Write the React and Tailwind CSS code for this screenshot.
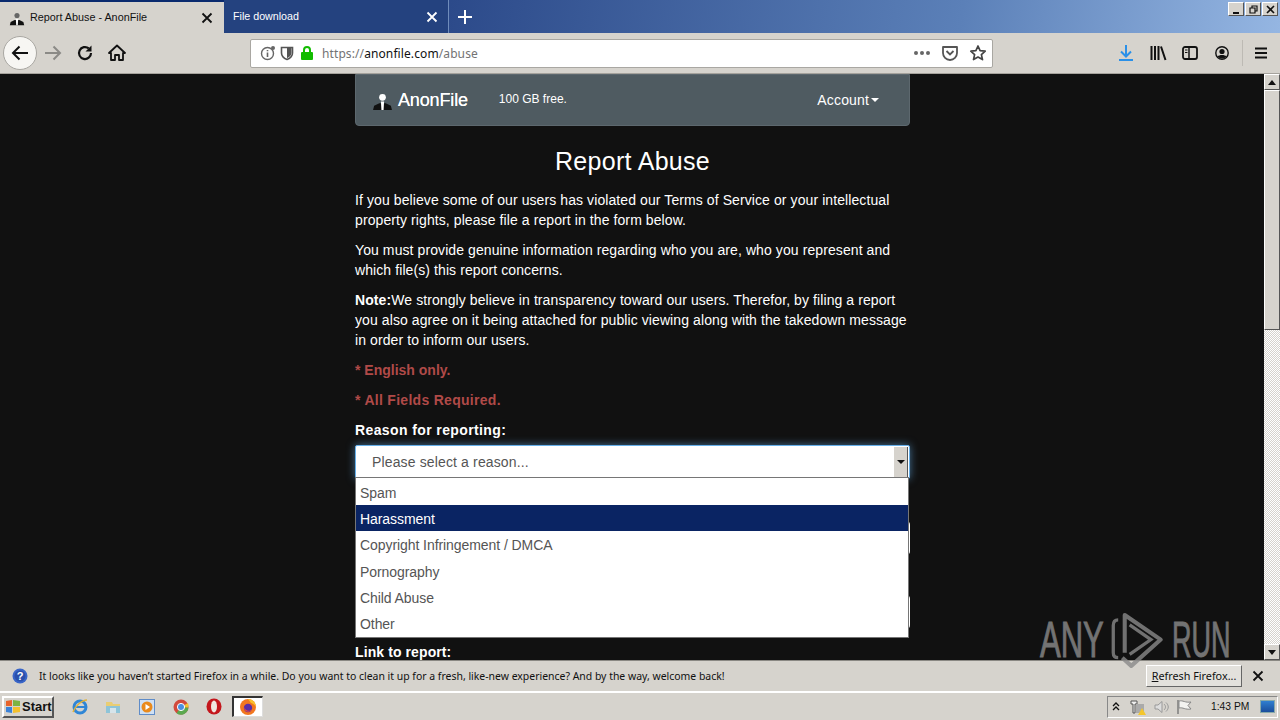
import React from "react";

const P = ({ children, className = "" }) => (
  <p className={"text-[14px] leading-[20px] text-white mb-[10px] " + className}>{children}</p>
);

const options = ["Spam", "Harassment", "Copyright Infringement / DMCA", "Pornography", "Child Abuse", "Other"];

function Suit({ size = 20, fg = "#111", head = "#fff", tie = "#fff" }) {
  return (
    <svg width={size} height={size} viewBox="0 0 20 20">
      <path d="M1 19 L2 15 L7 12.5 L13 12.5 L18 15 L19 19 Z" fill={fg} />
      <circle cx="10" cy="7" r="3.2" fill={head} />
      <path d="M8.5 11 L11.5 11 L11 19 L9 19 Z" fill={tie} />
    </svg>
  );
}

function TabBar() {
  return (
    <div className="h-[33px] flex bg-[linear-gradient(100deg,#24427f_0%,#2c4a8a_35%,#5b80b8_75%,#95b6e2_100%)] relative shrink-0">
      <div className="w-[224px] h-[33px] bg-[#d6d3cd] border-t-2 border-[#0a2a6e] flex items-center pl-[9px] pr-[11px]">
        <Suit size={16} head="#666" />
        <span className="ml-[5px] text-[10.8px] text-[#111] font-['Liberation_Sans',sans-serif]">Report Abuse - AnonFile</span>
        <svg className="ml-auto" width="12" height="12" viewBox="0 0 12 12"><path d="M1.5 1.5 L10.5 10.5 M10.5 1.5 L1.5 10.5" stroke="#111" strokeWidth="1.8" /></svg>
      </div>
      <div className="w-[225px] flex items-center pl-[9px] pr-[10px] bg-[#24427f] border-r border-[#6f8cbb]">
        <span className="text-[10.7px] text-white font-['Liberation_Sans',sans-serif]">File download</span>
        <svg className="ml-auto" width="12" height="12" viewBox="0 0 12 12"><path d="M1.5 1.5 L10.5 10.5 M10.5 1.5 L1.5 10.5" stroke="#fff" strokeWidth="1.8" /></svg>
      </div>
      <div className="w-[32px] flex items-center justify-center">
        <svg width="16" height="16" viewBox="0 0 16 16"><path d="M8 1 V15 M1 8 H15" stroke="#fff" strokeWidth="2" /></svg>
      </div>
      <div className="absolute right-[2px] top-[2px] flex gap-[1px]">
        {[
          <path key="a" d="M3 10 H9" stroke="#111" strokeWidth="2" />,
          <path key="b" d="M3 5 H8 V10 H3 Z M5 5 V3 H10 V8 H8" stroke="#111" strokeWidth="1.2" fill="none" />,
          <path key="c" d="M3 3 L10 10 M10 3 L3 10" stroke="#111" strokeWidth="1.6" />,
        ].map((ic, i) => (
          <div key={i} className="w-[16px] h-[14px] bg-[#d6d3cd] border-t border-l border-white border-r border-b border-r-[#555] border-b-[#555] flex items-center justify-center">
            <svg width="13" height="13" viewBox="0 0 13 13">{ic}</svg>
          </div>
        ))}
      </div>
    </div>
  );
}

function Toolbar() {
  return (
    <div className="h-[41px] bg-[#d6d3cd] flex items-center shrink-0 border-b border-[#a5a29c] relative">
      <div className="ml-[3px] w-[34px] h-[34px] rounded-full bg-[#f7f6f3] border border-[#a9a7a2] flex items-center justify-center">
        <svg width="20" height="20" viewBox="0 0 20 20"><path d="M18 10 H3 M9.5 3.5 L3 10 L9.5 16.5" stroke="#111" strokeWidth="2" fill="none" /></svg>
      </div>
      <svg className="ml-[6px]" width="20" height="20" viewBox="0 0 20 20"><path d="M2 10 H17 M10.5 3.5 L17 10 L10.5 16.5" stroke="#8b8a86" strokeWidth="2" fill="none" /></svg>
      <svg className="ml-[13px]" width="18" height="18" viewBox="0 0 18 18"><path d="M15 9 A6 6 0 1 1 12.8 4.4" stroke="#111" strokeWidth="2.2" fill="none" /><path d="M15.5 1.5 V7.5 H9.5 Z" fill="#111" /></svg>
      <svg className="ml-[14px]" width="18" height="18" viewBox="0 0 18 18"><path d="M9 1.5 L17 9 L15 9 L15 16 L11 16 L11 11 L7 11 L7 16 L3 16 L3 9 L1 9 Z" stroke="#111" strokeWidth="1.8" fill="none" strokeLinejoin="round" /></svg>

      <div className="ml-[124px] w-[743px] h-[29px] bg-white border border-[#a9a7a2] rounded-[2px] flex items-center pl-[9px] pr-[5px]">
        <svg width="16" height="16" viewBox="0 0 16 16"><circle cx="7.5" cy="8.5" r="6" stroke="#666" strokeWidth="1.4" fill="none" /><path d="M7.5 7.5 V12 M7.5 5 V6.2" stroke="#666" strokeWidth="1.6" /><circle cx="13" cy="3" r="2" fill="#666" /></svg>
        <svg className="ml-[4px]" width="14" height="16" viewBox="0 0 14 16"><path d="M1.5 2.5 H12.5 V8 C12.5 11.5 9.5 13.5 7 14.5 C4.5 13.5 1.5 11.5 1.5 8 Z" stroke="#555" strokeWidth="1.6" fill="none" /><path d="M7 3 H11.5 V8 C11.5 10.5 9 12.3 7 13.2 Z" fill="#555" /></svg>
        <svg className="ml-[6px]" width="14" height="16" viewBox="0 0 14 16"><path d="M4 7 V5 A3 3 0 0 1 10 5 V7" stroke="#12bc00" strokeWidth="2" fill="none" /><rect x="1" y="7" width="12" height="8" rx="1" fill="#12bc00" /></svg>
        <span className="ml-[8px] mt-[1px] text-[12px] tracking-[0.1px] text-[#737373] font-['Noto_Sans',sans-serif]">https://<span className="text-[#111]">anonfile.com</span>/abuse</span>
        <div className="ml-auto flex items-center">
          <span className="flex gap-[2px]"><i className="w-[4px] h-[4px] rounded-full bg-[#666] block" /><i className="w-[4px] h-[4px] rounded-full bg-[#666] block" /><i className="w-[4px] h-[4px] rounded-full bg-[#666] block" /></span>
          <svg className="ml-[11px]" width="18" height="18" viewBox="0 0 18 18"><path d="M2 3 H16 V9 A7 7 0 0 1 2 9 Z" stroke="#555" strokeWidth="1.8" fill="none" strokeLinejoin="round" /><path d="M5.5 7 L9 10.5 L12.5 7" stroke="#555" strokeWidth="1.8" fill="none" /></svg>
          <svg className="ml-[10px]" width="18" height="18" viewBox="0 0 18 18"><path d="M9 2 L11.1 6.7 L16.2 7.2 L12.4 10.6 L13.5 15.6 L9 13 L4.5 15.6 L5.6 10.6 L1.8 7.2 L6.9 6.7 Z" stroke="#444" strokeWidth="1.7" fill="none" strokeLinejoin="round" /></svg>
        </div>
      </div>

      <svg className="ml-[125px]" width="16" height="18" viewBox="0 0 16 18"><path d="M8 1 V12 M3 7.5 L8 12.5 L13 7.5" stroke="#2a90e8" strokeWidth="2" fill="none" /><path d="M1 16 H15" stroke="#2a90e8" strokeWidth="2" /></svg>
      <svg className="ml-[16px]" width="17" height="16" viewBox="0 0 17 16"><path d="M1.5 1 V15 M5 1 V15 M8.5 1 V15" stroke="#111" strokeWidth="2" /><path d="M11 1.5 L15.5 15" stroke="#111" strokeWidth="2" /></svg>
      <svg className="ml-[15px]" width="16" height="14" viewBox="0 0 16 14"><rect x="1" y="1" width="14" height="12" rx="2" stroke="#111" strokeWidth="1.8" fill="none" /><path d="M7 1 V13" stroke="#111" strokeWidth="1.5" /><path d="M3 4 H5.5 M3 6.5 H5.5" stroke="#111" strokeWidth="1" /></svg>
      <svg className="ml-[17px]" width="14" height="14" viewBox="0 0 14 14"><circle cx="7" cy="7" r="6.2" stroke="#111" strokeWidth="1.4" fill="none" /><circle cx="7" cy="5.5" r="2.6" fill="#111" /><path d="M2.6 10.5 C4 8.5 10 8.5 11.4 10.5 L9 12.5 H5 Z" fill="#111" /></svg>
      <div className="ml-[13px] w-px h-[26px] bg-[#bdbab4]" />
      <svg className="ml-[11px]" width="14" height="14" viewBox="0 0 14 14"><path d="M1 2.5 H13 M1 7 H13 M1 11.5 H13" stroke="#111" strokeWidth="2" /></svg>
    </div>
  );
}

function Scrollbar() {
  return (
    <div className="w-[16px] shrink-0 flex flex-col bg-[repeating-conic-gradient(#d6d3cd_0%_25%,#ffffff_0%_50%)] bg-[length:2px_2px]">
      <div className="h-[16px] bg-[#d6d3cd] border-t border-l border-white border-r border-b border-r-[#555] border-b-[#555] flex items-center justify-center">
        <svg width="8" height="5" viewBox="0 0 8 5"><path d="M0 5 L4 0 L8 5 Z" fill="#111" /></svg>
      </div>
      <div className="h-[240px] bg-[#d6d3cd] border-t border-l border-white border-r border-b border-r-[#555] border-b-[#555]" />
      <div className="mt-auto h-[16px] bg-[#d6d3cd] border-t border-l border-white border-r border-b border-r-[#555] border-b-[#555] flex items-center justify-center">
        <svg width="8" height="5" viewBox="0 0 8 5"><path d="M0 0 L4 5 L8 0 Z" fill="#111" /></svg>
      </div>
    </div>
  );
}

function Page() {
  return (
    <div className="flex-1 min-w-0 bg-[#111111] overflow-hidden flex justify-center font-['Liberation_Sans',sans-serif]">
      <div className="w-[555px] ml-[-1px] translate-x-[1px] relative">
        <div className="h-[52px] rounded-b-[4px] bg-[#4f5b61] border border-[#5d686e] flex items-center pl-[16px] pr-[30px]">
          <Suit size={21} />
          <span className="ml-[5px] text-[18px] font-normal text-white tracking-[-0.15px] [text-shadow:0_0_0.4px_#fff]">AnonFile</span>
          <span className="ml-[31px] mb-[3px] text-[12px] text-white">100 GB free.</span>
          <span className="ml-auto text-[14px] text-white tracking-[0.15px]">Account</span>
          <span className="ml-[2px] w-0 h-0 border-x-[4px] border-x-transparent border-t-[4px] border-t-white" />
        </div>
        <h1 className="mt-[20px] h-[30px] leading-[30px] text-center text-[25px] font-normal text-white tracking-[0.3px]">Report Abuse</h1>
        <div className="mt-[14px]">
          <P className="tracking-[0.09px]">If you believe some of our users has violated our Terms of Service or your intellectual property rights, please file a report in the form below.</P>
          <P className="tracking-[0.09px]">You must provide genuine information regarding who you are, who you represent and which file(s) this report concerns.</P>
          <P className="tracking-[0.09px]"><b>Note:</b>We strongly believe in transparency toward our users. Therefor, by filing a report you also agree on it being attached for public viewing along with the takedown message in order to inform our users.</P>
          <p className="text-[14px] leading-[20px] mb-[10px] font-bold text-[#b04a48]">* English only.</p>
          <p className="text-[14px] leading-[20px] mb-[10px] font-bold text-[#b04a48] tracking-[0.29px]">* All Fields Required.</p>
          <p className="text-[14px] leading-[20px] mb-[5px] font-bold text-white tracking-[0.39px]">Reason for reporting:</p>
        </div>
        <div className="relative w-[555px]">
          <div className="h-[34px] bg-white border border-[#66afe9] rounded-[2px] shadow-[0_0_8px_rgba(102,175,233,0.6)] flex items-center pl-[16px] text-[14px] tracking-[0.14px] text-[#555]">
            Please select a reason...
            <div className="ml-auto mr-[1px] w-[14px] h-[31px] bg-[#d6d3cd] border-r border-b border-[#555] flex items-center justify-center">
              <svg width="8" height="4" viewBox="0 0 8 4"><path d="M0 0 L4 4 L8 0 Z" fill="#111" /></svg>
            </div>
          </div>
          <div className="absolute left-0 right-[1px] top-[32px] z-10 bg-white border border-[#767676] pt-[1px] pb-[1px]">
            {options.map((o) => (
              <div key={o} className={"h-[26.2px] leading-[28px] pl-[4px] text-[14px] tracking-[-0.07px] " + (o === "Harassment" ? "bg-[#0a2463] text-white" : "text-[#555]")}>{o}</div>
            ))}
          </div>
          <div className="mt-[42px] h-[34px] bg-white rounded-[4px]" />
          <div className="mt-[40px] h-[34px] bg-white rounded-[4px]" />
          <div className="mt-[13px] font-bold text-[14px] leading-[20px] text-white tracking-[0.1px]">Link to report:</div>
        </div>
      </div>
    </div>
  );
}

function Watermark() {
  return (
    <div className="absolute left-[1040px] top-[610px] h-[60px] flex items-center pointer-events-none z-20 font-['Liberation_Sans',sans-serif] text-[#737373]">
      <span className="block w-[70px] text-[50px] leading-[60px] font-normal scale-x-[0.62] origin-left whitespace-nowrap mt-[-1px] [-webkit-text-stroke:1px_#737373]">ANY</span>
      <svg width="54" height="60" viewBox="0 0 66 73" className="opacity-80" preserveAspectRatio="none">
        <path d="M10 12 C5 12 4 16 4 19 V52 C4 56 6 58 10 58" stroke="#8a8a8a" strokeWidth="4" fill="none" />
        <path d="M18 52 V6 L62 36 L26 68 L15 58" stroke="#8a8a8a" strokeWidth="5" fill="none" strokeLinejoin="round" />
        <path d="M24 18 L50 36 L24 54" stroke="#8a8a8a" strokeWidth="4" fill="none" />
      </svg>
      <span className="block ml-[8px] w-[60px] text-[50px] leading-[60px] font-normal scale-x-[0.54] origin-left whitespace-nowrap mt-[-1px] [-webkit-text-stroke:1px_#737373]">RUN</span>
    </div>
  );
}

function Notice() {
  return (
    <div className="h-[33px] bg-[#d6d3cd] border-t border-[#8a8883] border-b-2 border-b-white flex items-center pl-[12px] pr-[16px] shrink-0 font-['Noto_Sans',sans-serif]">
      <svg width="16" height="16" viewBox="0 0 16 16"><circle cx="8" cy="8" r="7.5" fill="#3a66c8" /><circle cx="8" cy="8" r="5.5" fill="#2b50ac" /><text x="8" y="12" textAnchor="middle" fontSize="11" fontWeight="700" fill="#fff" fontFamily="Liberation Sans">?</text></svg>
      <span className="ml-[11px] mt-[1px] text-[10.45px] text-[#111]">It looks like you haven’t started Firefox in a while. Do you want to clean it up for a fresh, like-new experience? And by the way, welcome back!</span>
      <div className="ml-auto h-[22px] w-[96px] bg-[#e3e1dc] border border-t-white border-l-white border-r-[#666] border-b-[#666] flex items-center justify-center text-[10.8px] text-[#111]"><span><u>R</u>efresh Firefox...</span></div>
      <svg className="ml-[10px]" width="12" height="12" viewBox="0 0 12 12"><path d="M1.5 1.5 L10.5 10.5 M10.5 1.5 L1.5 10.5" stroke="#111" strokeWidth="1.8" /></svg>
    </div>
  );
}

function Taskbar() {
  return (
    <div className="h-[27px] bg-[#d6d3cd] flex items-center shrink-0">
      <div className="ml-[2px] w-[52px] h-[22px] bg-[#d6d3cd] border-2 border-t-white border-l-white border-r-[#555] border-b-[#555] flex items-center pl-[1px]">
        <svg width="16" height="15" viewBox="0 0 16 15"><path d="M1 2 L7 1 L7 7 L1 7 Z" fill="#e8642c" /><path d="M8 1 L15 2 L15 7 L8 7 Z" fill="#7cb342" /><path d="M1 8 L7 8 L7 14 L1 13 Z" fill="#3b82d8" /><path d="M8 8 L15 8 L15 13 L8 14 Z" fill="#f4c02c" /></svg>
        <span className="ml-[1px] text-[13px] font-bold text-[#111] font-['Liberation_Sans',sans-serif]">Start</span>
      </div>
      <svg className="ml-[18px]" width="16" height="17" viewBox="0 0 16 17"><circle cx="8" cy="9" r="6" stroke="#2f86d6" strokeWidth="3" fill="none" /><path d="M2 9 H14" stroke="#2f86d6" strokeWidth="2" /><path d="M1 14 C3 8 10 2 15 2" stroke="#e2b23a" strokeWidth="1.5" fill="none" /></svg>
      <svg className="ml-[17px]" width="16" height="16" viewBox="0 0 16 16"><path d="M1 3 H7 L8 5 H15 V14 H1 Z" fill="#e9cd73" /><rect x="1" y="7" width="14" height="7" fill="#8ec4d8" /><rect x="5" y="9" width="6" height="5" fill="#d6e4ea" /></svg>
      <svg className="ml-[18px]" width="16" height="16" viewBox="0 0 16 16"><rect x="0.5" y="0.5" width="15" height="15" fill="#cfe0f4" stroke="#5f8cc8" /><circle cx="8" cy="8" r="5.5" fill="#ea8a1c" /><path d="M6.5 5 L11 8 L6.5 11 Z" fill="#fff" /></svg>
      <svg className="ml-[18px]" width="16" height="16" viewBox="0 0 16 16"><circle cx="8" cy="8" r="7.5" fill="#d24a3c" /><path d="M8 8 L3.5 14.3 A7.5 7.5 0 0 0 15.4 8.5 Z" fill="#5ba84f" /><path d="M8 8 L15.4 8.5 A7.5 7.5 0 0 0 15 4 Z" fill="#f2c230" /><circle cx="8" cy="8" r="3.6" fill="#4a8fe0" stroke="#fff" /></svg>
      <svg className="ml-[17px]" width="16" height="17" viewBox="0 0 16 17"><ellipse cx="8" cy="8.5" rx="7.5" ry="8" fill="#c4161c" /><ellipse cx="8" cy="8.5" rx="3" ry="6" fill="#f0e6e0" /></svg>
      <div className="ml-[10px] w-[31px] h-[21px] bg-white border-t-2 border-l-2 border-[#333] border-r border-b border-r-[#ddd] border-b-[#ddd] flex items-center justify-center">
        <svg width="18" height="18" viewBox="0 0 18 18"><circle cx="9" cy="9" r="8" fill="#f2771f" /><path d="M9 1 C14 1 17 5 17 9 C15 6 13 5 12 5 Z" fill="#f9c22c" /><circle cx="9" cy="10" r="4.2" fill="#5a2ea6" /><path d="M5 9 C6 13 11 14 13 11 C12 15 5 15 5 9 Z" fill="#ef4a3a" /></svg>
      </div>
      <div className="ml-auto mr-[2px] w-[171px] h-[22px] border border-t-[#888] border-l-[#888] border-r-white border-b-white flex items-center pl-[4px] font-['Liberation_Sans',sans-serif]">
        <svg width="8" height="9" viewBox="0 0 8 9"><path d="M1 4 L4 1 L7 4 M1 8 L4 5 L7 8" stroke="#111" strokeWidth="1.3" fill="none" /></svg>
        <svg className="ml-[10px]" width="16" height="16" viewBox="0 0 16 16"><path d="M1 2 H7 V5 H5 V14 H3 V5 H1 Z" stroke="#555" fill="#eee" /><rect x="6" y="5" width="8" height="9" fill="#aaa" /><path d="M12 9 L16 16 H8 Z" fill="#f4c62c" /></svg>
        <svg className="ml-[8px]" width="16" height="14" viewBox="0 0 16 14"><path d="M1 5 H4 L8 1.5 V12.5 L4 9 H1 Z" fill="#ddd" stroke="#999" /><path d="M10 4 C12 6 12 8 10 10 M12 2.5 C15 5.5 15 8.5 12 11.5" stroke="#999" fill="none" /></svg>
        <svg className="ml-[6px]" width="16" height="16" viewBox="0 0 16 16"><path d="M2 1 V15" stroke="#777" strokeWidth="1.4" /><path d="M3 2 C7 1 9 4 15 3 L12 6.5 L15 10 C9 11 7 8 3 9 Z" fill="#f3f3f0" stroke="#888" /></svg>
        <span className="ml-[19px] text-[10.3px] text-[#111]">1:43 PM</span>
        <div className="ml-auto mr-[2px] w-[15px] h-[13px] bg-[linear-gradient(180deg,#2f7fd0,#1a4e9c)] border border-[#8aa]" />
      </div>
    </div>
  );
}

export default function App() {
  return (
    <div className="w-[1280px] h-[720px] overflow-hidden flex flex-col relative bg-[#d6d3cd]">
      <TabBar />
      <Toolbar />
      <div className="flex-1 min-h-0 flex">
        <Page />
        <Scrollbar />
      </div>
      <Watermark />
      <Notice />
      <Taskbar />
    </div>
  );
}
